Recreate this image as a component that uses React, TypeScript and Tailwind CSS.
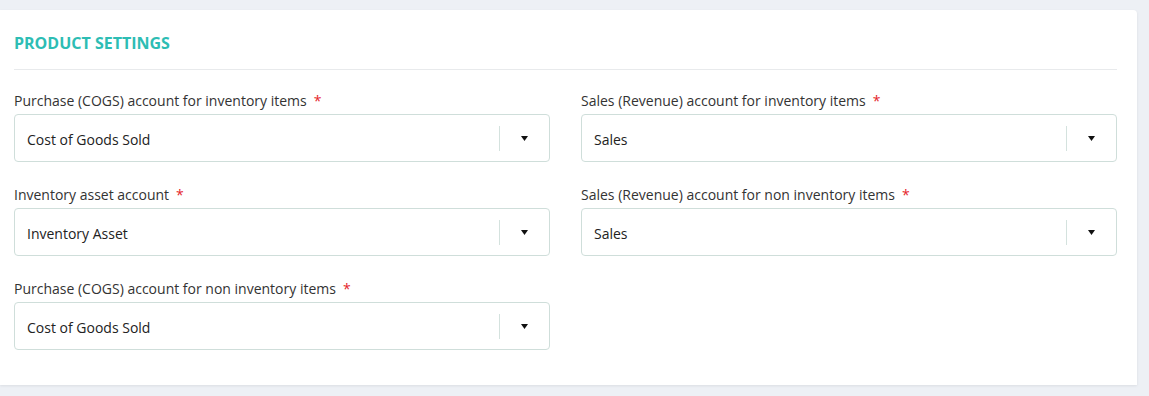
const fields = [
  { label: "Purchase (COGS) account for inventory items", value: "Cost of Goods Sold" },
  { label: "Sales (Revenue) account for inventory items", value: "Sales" },
  { label: "Inventory asset account", value: "Inventory Asset" },
  { label: "Sales (Revenue) account for non inventory items", value: "Sales" },
  { label: "Purchase (COGS) account for non inventory items", value: "Cost of Goods Sold" },
]

function SelectField({ label, value }: { label: string; value: string }) {
  return (
    <div>
      <label className="block text-[14px] leading-5 text-[#333]">
        {label}
        <span className="ml-[7px] text-[#e5252a]">*</span>
      </label>
      <div className="mt-[3px] flex h-[48px] items-center rounded-[4px] border border-[#cfdeda] bg-white">
        <span className="flex-1 pl-[12px] pt-[2px] text-[14px] text-[#222]">{value}</span>
        <span className="h-[25px] w-px bg-[#d4e2de]" />
        <span className="flex w-[49px] justify-center">
          <svg width="7" height="5" viewBox="0 0 7 5">
            <path d="M0 0h7L3.5 5z" fill="#111" />
          </svg>
        </span>
      </div>
    </div>
  )
}

export default function App() {
  return (
    <div className="h-[396px] bg-[#edf0f5] pt-[10px] font-['Open_Sans',sans-serif]">
      <div className="w-[1137px] rounded-tr-[4px] bg-white pl-[14px] pr-[20px] pt-[21px] pb-[35px] shadow-[0_1px_3px_rgba(0,0,0,0.08)]">
        <h2 className="text-[16px] font-bold leading-6 text-[#2dbdb4] uppercase">
          Product Settings
        </h2>
        <div className="mt-[14px] border-t border-[#e8eaec]" />
        <div className="mt-[21px] grid grid-cols-2 gap-x-[31px] gap-y-[23px]">
          {fields.map((f, i) => (
            <SelectField key={i} label={f.label} value={f.value} />
          ))}
        </div>
      </div>
    </div>
  )
}
